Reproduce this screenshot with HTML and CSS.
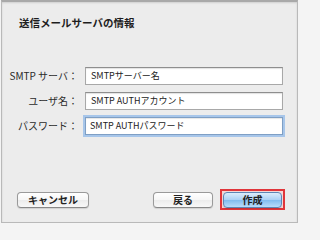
FILE: index.html
```html
<!DOCTYPE html>
<html lang="ja">
<head>
<meta charset="utf-8">
<link rel="stylesheet" href="styles.css">
</head>
<body>
<div class="window">
  <h1 class="title">送信メールサーバの情報</h1>
  <div class="form">
    <label class="label">SMTP サーバ：</label>
    <div class="field">SMTPサーバー名</div>
    <label class="label">ユーザ名：</label>
    <div class="field">SMTP AUTHアカウント</div>
    <label class="label">パスワード：</label>
    <div class="field focused">SMTP AUTHパスワード</div>
  </div>
  <div class="footer">
    <button class="btn cancel">キャンセル</button>
    <div class="spacer"></div>
    <button class="btn back">戻る</button>
    <div class="highlight"><button class="btn primary">作成</button></div>
  </div>
</div>
</body>
</html>
```
FILE: styles.css
```css
html, body {
  margin: 0;
  padding: 0;
  background: #f4f4f4;
}
body {
  font-family: "Noto Sans CJK JP", "Noto Sans", sans-serif;
  color: #222;
}
.window {
  box-sizing: border-box;
  width: 297px;
  height: 223px;
  margin-left: 1px;
  background: #ececec;
  border: 1px solid #b9b9b9;
  border-top: 2px solid #a9a9a9;
  box-shadow: inset 0 1px 2px rgba(0,0,0,0.12);
  display: flex;
  flex-direction: column;
}
.title {
  margin: 14px 0 0 17px;
  font-size: 10.5px;
  line-height: 14px;
  font-weight: bold;
  color: #1e1e1e;
}
.form {
  margin-top: 37px;
  display: grid;
  grid-template-columns: 76px 198px;
  grid-auto-rows: 18px;
  column-gap: 7px;
  row-gap: 7px;
}
.label {
  font-size: 10px;
  line-height: 18px;
  text-align: right;
  white-space: nowrap;
  color: #2a2a2a;
}
.field {
  box-sizing: border-box;
  background: #fff;
  border: 1px solid #a8a8a8;
  border-top-color: #8e8e8e;
  box-shadow: inset 0 1px 1px rgba(0,0,0,0.12);
  font-size: 9px;
  line-height: 16px;
  padding-left: 5px;
  color: #222;
  white-space: nowrap;
}
.field.focused {
  border: 1px solid #7f9fc4;
  box-shadow: 0 0 0 2px #a7c6ea, inset 0 1px 1px rgba(0,0,0,0.1);
  padding-left: 4px;
}
.footer {
  margin-top: auto;
  margin-bottom: 12px;
  display: flex;
  align-items: center;
  padding: 0 12px 0 15px;
}
.spacer { flex: 1; }
.btn {
  box-sizing: border-box;
  height: 16px;
  padding: 0;
  font-family: "Noto Sans CJK JP", "Noto Sans", sans-serif;
  font-size: 10px;
  font-weight: bold;
  line-height: 14px;
  color: #222;
  border: 1px solid #9a9a9a;
  border-bottom-color: #888;
  border-radius: 4px;
  background: linear-gradient(#ffffff, #f6f6f6 50%, #ececec 51%, #f8f8f8);
  box-shadow: 0 1px 1px rgba(0,0,0,0.12);
}
.cancel { width: 72px; }
.back { width: 60px; margin-right: 7px; }
.highlight {
  box-sizing: border-box;
  width: 65px;
  height: 21px;
  border: 2px solid #e0353a;
  background: #f3d7d7;
  display: flex;
  align-items: center;
  justify-content: center;
}
.primary {
  width: 59px;
  border-color: #5d86b5;
  background: linear-gradient(#dcecfb, #a9d0f5 50%, #80bbef 51%, #b8dcfb);
}
```
